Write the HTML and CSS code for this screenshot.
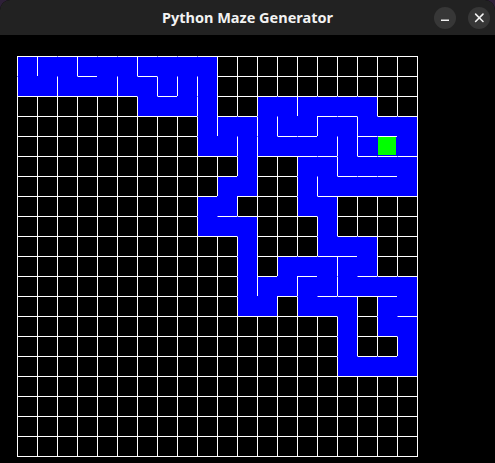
FILE: index.html
```html
<!DOCTYPE html>
<html lang="en">
<head>
<meta charset="utf-8">
<title>Python Maze Generator</title>
<link rel="stylesheet" href="styles.css">
</head>
<body>
<div class="window">
  <header class="titlebar">
    <span class="spacer"></span>
    <h1 class="title">Python Maze Generator</h1>
    <div class="controls">
      <button class="ctl" aria-label="Minimize">
        <svg width="22" height="22" viewBox="0 0 22 22"><line x1="7" y1="13.2" x2="15" y2="13.2" stroke="#f2f2f2" stroke-width="1.6"/></svg>
      </button>
      <button class="ctl" aria-label="Close">
        <svg width="22" height="22" viewBox="0 0 22 22"><path d="M7.6 7.1 L15 14.5 M15 7.1 L7.6 14.5" stroke="#f2f2f2" stroke-width="1.6" stroke-linecap="round"/></svg>
      </button>
    </div>
  </header>
  <main class="content">
    <div class="maze" id="maze"></div>
  </main>
</div>
<script src="script.js"></script>
</body>
</html>
```
FILE: styles.css
```css
html, body {
  margin: 0;
  padding: 0;
  background: #2e2038;
}
.window {
  width: 495px;
  height: 463px;
  background: #000;
  border-radius: 10px 10px 0 0;
  overflow: hidden;
  display: flex;
  flex-direction: column;
}
.titlebar {
  height: 35px;
  background: #222222;
  display: grid;
  grid-template-columns: 1fr auto 1fr;
  align-items: center;
}
.title {
  margin: 0;
  font-family: "Noto Sans", "DejaVu Sans", sans-serif;
  font-weight: 700;
  font-size: 14.5px;
  color: #f2f2f2;
  line-height: 1;
  padding-bottom: 1px;
}
.controls {
  justify-self: end;
  display: flex;
  gap: 12px;
  padding-right: 5px;
}
.ctl {
  width: 22px;
  height: 22px;
  padding: 0;
  margin: 0;
  border: none;
  border-radius: 50%;
  background: #373737;
  display: flex;
  align-items: center;
  justify-content: center;
}
.ctl svg {
  display: block;
}
.content {
  flex: 1;
  padding: 21px 0 0 17px;
  background: #000;
}
.maze {
  display: grid;
  grid-template-columns: repeat(20, 20px);
  grid-template-rows: repeat(20, 20px);
  width: 400px;
  border-right: 1px solid #fff;
  border-bottom: 1px solid #fff;
}
.cell {
  box-sizing: border-box;
  width: 20px;
  height: 20px;
  background: #000;
  border-top: 1px solid #fff;
  border-left: 1px solid #fff;
}
.cell.on {
  background: #0000ff;
}
.cell.nt {
  border-top-color: transparent;
}
.cell.nl {
  border-left-color: transparent;
}
.head {
  width: 18px;
  height: 18px;
  background: #00ff00;
}
```
FILE: script.js
```js
const N = 20;
const chains = [
  [[0,0],[0,1],[1,1],[1,0],[2,0],[2,1],[3,1],[4,1],[4,0],[3,0]],
  [[4,0],[5,0],[5,1],[6,1],[6,2],[7,2],[8,2],[8,1],[8,0],[7,0],[6,0]],
  [[7,0],[7,1]],
  [[8,0],[9,0],[9,1],[9,2],[9,3],[9,4],[10,4],[10,3],[11,3],[11,4],[11,5],[11,6],[10,6],[10,7],[9,7],[9,8],[10,8],[11,8],[11,9],[11,10],[11,11],[11,12],[12,12],[12,11],[13,11],[13,10],[14,10],[15,10],[15,11],[14,11],[14,12],[15,12],[16,12],[16,13],[16,14],[16,15],[17,15],[18,15],[19,15],[19,14],[19,13],[18,13],[18,12],[19,12],[19,11],[18,11],[17,11],[16,11],[16,10],[17,10],[17,9],[16,9],[15,9],[15,8],[15,7],[14,7],[14,6],[14,5],[15,5],[15,6],[16,6],[17,6],[18,6],[19,6],[19,5],[18,5],[17,5],[16,5],[16,4],[16,3],[15,3],[15,4],[14,4],[13,4],[12,4],[12,3],[12,2],[13,2],[13,3],[14,3],[14,2],[15,2],[16,2],[17,2],[17,3],[18,3],[19,3],[19,4],[18,4],[17,4]]
];
const head = [18, 4];
const blue = new Set();
const open = new Set();
const key = (c, r) => c + "," + r;
for (const ch of chains) {
  for (let i = 0; i < ch.length; i++) {
    blue.add(key(ch[i][0], ch[i][1]));
    if (i > 0) {
      const a = ch[i - 1], b = ch[i];
      open.add(key(a[0], a[1]) + "|" + key(b[0], b[1]));
      open.add(key(b[0], b[1]) + "|" + key(a[0], a[1]));
    }
  }
}
const maze = document.getElementById("maze");
for (let r = 0; r < N; r++) {
  for (let c = 0; c < N; c++) {
    const d = document.createElement("div");
    d.className = "cell";
    const k = key(c, r);
    if (blue.has(k)) d.classList.add("on");
    if (r > 0 && open.has(key(c, r - 1) + "|" + k)) d.classList.add("nt");
    if (c > 0 && open.has(key(c - 1, r) + "|" + k)) d.classList.add("nl");
    if (c === head[0] && r === head[1]) {
      const h = document.createElement("div");
      h.className = "head";
      d.appendChild(h);
    }
    maze.appendChild(d);
  }
}
```
